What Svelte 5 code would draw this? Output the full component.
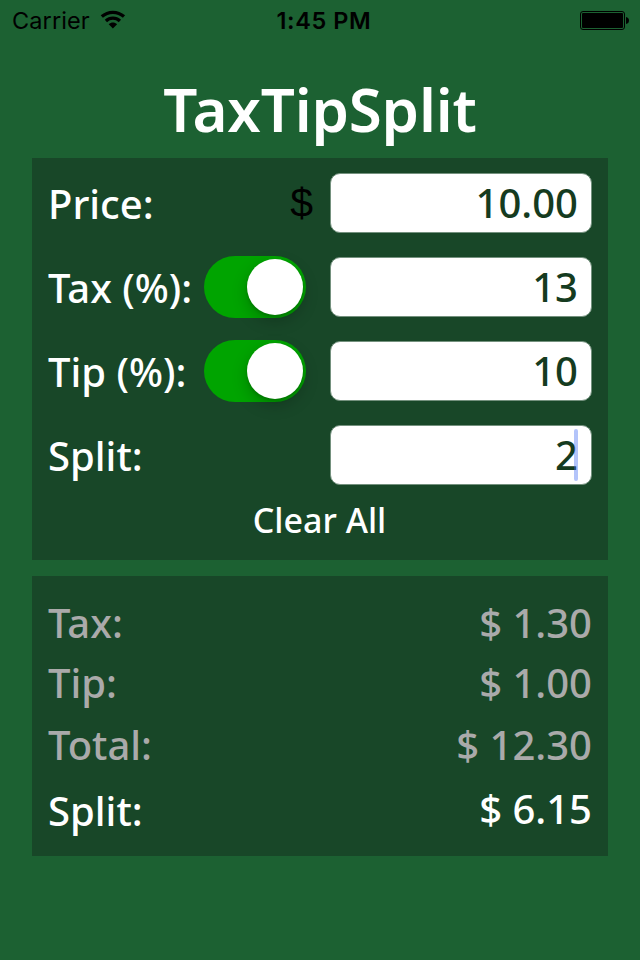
<script lang="ts">
	let price = '10.00';
	let tax = '13';
	let tip = '10';
	let split = '2';
	let taxOn = true;
	let tipOn = true;

	function clearAll() {
		price = '';
		tax = '';
		tip = '';
		split = '';
	}

	const money = (n: number) => '$ ' + n.toFixed(2);

	$: base = Number(price) || 0;
	$: taxAmount = taxOn ? (base * (Number(tax) || 0)) / 100 : 0;
	$: tipAmount = tipOn ? (base * (Number(tip) || 0)) / 100 : 0;
	$: total = base + taxAmount + tipAmount;
	$: perPerson = total / (Number(split) || 1);
</script>

<div class="screen">
	<header class="status">
		<div class="carrier">
			<span>Carrier</span>
			<svg class="wifi" width="26" height="20" viewBox="0 0 26 20">
				<path d="M1.8 6.6 C8.2 .9 17.6 .9 24 6.6" />
				<path d="M5.9 11 C10 7.2 15.800 7.2 19.9 11" />
				<path class="dot" d="M8.700 14.2 C11.2 12 14.6 12 17.1 14.2 L12.9 18.4 Z" />
			</svg>
		</div>
		<span class="time">1:45 PM</span>
		<svg class="battery" width="50" height="20" viewBox="0 0 50 20">
			<rect class="shell" x=".5" y="1.5" width="44" height="18" rx="2.5" />
			<rect x="2" y="3" width="41" height="15" rx="1" />
			<path d="M46 7 Q49 7.5 49 10.5 Q49 13.5 46 14 Z" />
		</svg>
	</header>

	<h1>TaxTipSplit</h1>

	<section class="panel form">
		<div class="row">
			<label for="price">Price:</label>
			<span class="currency">$</span>
			<input id="price" inputmode="decimal" bind:value={price} />
		</div>
		<div class="row">
			<label for="tax">Tax (%):</label>
			<button class="switch" class:on={taxOn} aria-label="Tax" on:click={() => (taxOn = !taxOn)}>
				<span class="thumb"></span>
			</button>
			<input id="tax" inputmode="decimal" bind:value={tax} />
		</div>
		<div class="row">
			<label for="tip">Tip (%):</label>
			<button class="switch" class:on={tipOn} aria-label="Tip" on:click={() => (tipOn = !tipOn)}>
				<span class="thumb"></span>
			</button>
			<input id="tip" inputmode="decimal" bind:value={tip} />
		</div>
		<div class="row">
			<label for="split">Split:</label>
			<input id="split" inputmode="numeric" bind:value={split} />
			<span class="caret"></span>
		</div>
		<button class="clear" on:click={clearAll}>Clear All</button>
	</section>

	<section class="panel results">
		<div class="result">
			<span>Tax:</span>
			<span>{money(taxAmount)}</span>
		</div>
		<div class="result">
			<span>Tip:</span>
			<span>{money(tipAmount)}</span>
		</div>
		<div class="result total">
			<span>Total:</span>
			<span>{money(total)}</span>
		</div>
		<div class="result share">
			<span>Split:</span>
			<span>{money(perPerson)}</span>
		</div>
	</section>
</div>

<style>
	:global(body) {
		background: #1c6132;
	}

	.screen {
		box-sizing: border-box;
		width: 640px;
		height: 960px;
		overflow: hidden;
		background: #1c6132;
		color: #fff;
		font: 500 40px/60px 'Noto Sans', sans-serif;
	}

	.status {
		display: grid;
		grid-template-columns: 1fr auto 1fr;
		align-items: center;
		height: 40px;
		padding: 0 10px 0 12px;
		color: #000;
		font: 400 23.5px/42px Inter, sans-serif;
	}

	.carrier {
		display: flex;
		align-items: center;
		gap: 10px;
		letter-spacing: 0.1px;
	}

	.wifi {
		margin-bottom: 2px;
	}

	.wifi path {
		fill: none;
		stroke: #000;
		stroke-width: 3.3;
	}

	.wifi .dot {
		fill: #000;
		stroke: none;
	}

	.time {
		padding-left: 6px;
		font-weight: 600;
		letter-spacing: 0.6px;
	}

	.battery {
		justify-self: end;
		margin-bottom: 2px;
	}

	.battery .shell {
		fill: none;
		stroke: #000;
	}

	h1 {
		height: 118px;
		margin: 0;
		font-size: 60px;
		font-weight: 600;
		line-height: 139px;
		letter-spacing: -0.2px;
		text-align: center;
	}

	.panel {
		box-sizing: border-box;
		margin: 0 32px 16px;
		padding: 0 16px;
		background: #184728;
	}

	.form {
		height: 402px;
		padding-top: 15px;
	}

	.row {
		position: relative;
		display: flex;
		align-items: center;
		height: 60px;
		margin-bottom: 24px;
	}

	label {
		width: 156px;
		padding-top: 2px;
		white-space: nowrap;
	}

	.currency {
		width: 110px;
		box-sizing: border-box;
		padding-right: 1px;
		color: #000;
		font: 400 41px/62px 'Liberation Sans', sans-serif;
		text-align: right;
	}

	input {
		box-sizing: border-box;
		width: 262px;
		height: 60px;
		margin: 0 0 0 auto;
		padding: 0 13px;
		border: 1px solid #74917e;
		border-radius: 10px;
		outline: none;
		background: #fff;
		color: #153b20;
		font: inherit;
		text-align: right;
	}

	.switch {
		box-sizing: border-box;
		display: flex;
		width: 102px;
		height: 62px;
		padding: 3px;
		border: 0;
		border-radius: 31px;
		background: #0f3019;
	}

	.switch.on {
		justify-content: flex-end;
		background: #00a400;
	}

	.thumb {
		width: 56px;
		height: 56px;
		border-radius: 50%;
		background: #fff;
		box-shadow: 0 6px 16px rgba(0, 0, 0, 0.22), 0 2px 3px rgba(0, 0, 0, 0.15);
	}

	.caret {
		position: absolute;
		top: 4px;
		right: 14px;
		width: 4px;
		height: 52px;
		border-radius: 2px;
		background: rgba(66, 107, 242, 0.4);
	}

	.clear {
		display: block;
		margin: -14px auto 0;
		padding: 0 1px 0 0;
		border: 0;
		background: none;
		color: #fff;
		font: 500 34px/50px 'Noto Sans', sans-serif;
	}

	.results {
		height: 280px;
		padding-top: 17px;
	}

	.result {
		display: flex;
		justify-content: space-between;
		color: #aaa;
		line-height: 60px;
	}

	.total {
		line-height: 64px;
	}

	.share {
		color: #fff;
		line-height: 64px;
	}

	.share span:first-child {
		padding-top: 2px;
	}
</style>
